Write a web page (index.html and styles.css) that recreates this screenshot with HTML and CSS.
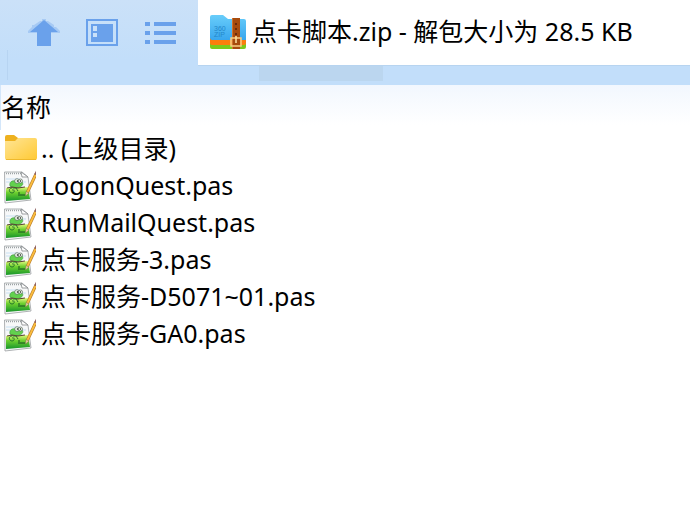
FILE: index.html
```
<!DOCTYPE html>
<html lang="zh-CN">

<head>
    <meta charset="UTF-8">
    <meta name="viewport" content="width=device-width, initial-scale=1.0">
    <title>点卡脚本.zip</title>
    <link rel="stylesheet" href="styles.css">
</head>

<body>
    <!-- shared icon for the .pas files -->
    <svg class="defs" aria-hidden="true">
        <defs>
            <linearGradient id="grass" x1="0" y1="0" x2="0" y2="1">
                <stop offset="0" stop-color="#e8fa80" />
                <stop offset="0.4" stop-color="#6ccf2f" />
                <stop offset="1" stop-color="#17952b" />
            </linearGradient>
            <linearGradient id="yellow" x1="0" y1="0" x2="1" y2="1">
                <stop offset="0" stop-color="#ffe596" />
                <stop offset="1" stop-color="#ffc933" />
            </linearGradient>
            <linearGradient id="blue" x1="0" y1="0" x2="0" y2="1">
                <stop offset="0" stop-color="#68cdfa" />
                <stop offset="1" stop-color="#38a6ee" />
            </linearGradient>
            <symbol id="pas" viewBox="0 0 36 36">
                <path d="M4.500 4H22L28 9L31 32L5 35Z" fill="#f7f8f9" stroke="#9a9ea1" stroke-width=".8" />
                <path d="M6 5.500H21" stroke="#9da2a5" stroke-width="1.500" stroke-dasharray="1 1" />
                <path d="M6 11H20M6 14H26" stroke="#d8e8f5" stroke-width="1.500" />
                <path d="M21 4L22 9H28Z" fill="#fff" stroke="#85898c" stroke-width=".8" />
                <path d="M6 20L28 19L30 31L6 33Z" fill="url(#grass)" />
                <path d="M10 18C9 14 12 12 16 13L22 14C24 16 22 18 20 19L14 21Z" fill="#62d14e" stroke="#3b9340" stroke-width=".6" />
                <path d="M12 20C8 20 9 25 12 25S15 21 12 22M16 20L18 23" fill="none" stroke="#27752c" stroke-width="1" />
                <path d="M7 20L12 19L18 20L25 19" fill="none" stroke="#574432" stroke-width="1.200" />
                <circle cx="17" cy="13" r="2.300" fill="#f4fff0" stroke="#59655c" stroke-width=".7" />
                <circle cx="20.500" cy="13" r="2" fill="#f4fff0" stroke="#59655c" stroke-width=".7" />
                <circle cx="17.500" cy="13" r=".8" fill="#111" />
                <circle cx="20.500" cy="13" r=".7" fill="#111" />
                <path d="M19 24V28M20 27H25" stroke="#164e20" stroke-width="1" />
                <path d="M27.500 24L36 6" stroke="#b67a28" stroke-width="3" />
                <path d="M27.500 24L36 6" stroke="#fbbd3e" stroke-width="1.800" />
                <path d="M35.500 7L37.500 3" stroke="#8f6262" stroke-width="3" />
                <path d="M25.500 28L26 23.500L29 25Z" fill="#edcfa0" stroke="#746047" stroke-width=".4" />
            </symbol>
        </defs>
    </svg>

    <header class="top">
        <div class="bar">
            <div class="tools">
                <button type="button" aria-label="上一级">
                    <svg width="32" height="28" viewBox="0 0 32 28" fill="#6aa1eb">
                        <path d="M14 0H18V2H20L26 6V8H28L32 12V14H23V27H9V14H0V12L4 8V6H6L12 2H14Z" fill-opacity=".35" />
                        <path d="M16 1L30 13H23V27H9V13H2Z" />
                    </svg>
                </button>
                <button type="button" aria-label="视图">
                    <svg width="32" height="28" viewBox="0 0 32 28">
                        <path d="M1 1H31V26H1Z" fill="none" stroke="#6aa1eb" stroke-width="2" />
                        <path d="M5 5H27V23H5Z" fill="#6aa1eb" />
                        <path d="M7 7H11V12H7ZM7 14H11V18H7Z" fill="#cae1f9" />
                    </svg>
                </button>
                <button type="button" aria-label="列表">
                    <svg width="32" height="28" viewBox="0 0 32 28" fill="#6aa1eb">
                        <path d="M1 3H6V7H1ZM10 3H32V7H10ZM1 12H6V16H1ZM10 12H32V16H10ZM1 21H6V25H1ZM10 21H32V25H10Z" />
                    </svg>
                </button>
            </div>
            <div class="title">
                <svg width="36" height="36" viewBox="0 0 36 36" aria-hidden="true">
                    <rect y="22" width="36" height="13" rx="2" fill="#7cc91b" />
                    <rect y="18" width="36" height="13" rx="2" fill="#fb7e0c" />
                    <path d="M0 3Q0 1 2 1H13L18 5H34Q36 5 36 7V26H2Q0 26 0 24Z" fill="url(#blue)" />
                    <text class="zip" x="4" y="17">360</text>
                    <text class="zip" x="4" y="23">ZIP</text>
                    <path d="M22 4H30V35H22Z" fill="#a74b0e" />
                    <path d="M22 4H23V35H22Z" fill="#cf722c" />
                    <path d="M25 9H27V11H25ZM25 14H27V16H25ZM25 19H27V21H25Z" fill="#692b0c" />
                    <rect x="21" y="24" width="10" height="8" fill="none" stroke="#f7cd83" stroke-width="1.500" />
                    <path d="M26 22V29" stroke="#ffe2a5" stroke-width="1.500" />
                </svg>
                <h1>点卡脚本.zip - 解包大小为 28.5 KB</h1>
            </div>
        </div>
        <div class="tab"></div>
    </header>

    <!-- file list -->
    <table class="files">
        <thead>
            <tr>
                <th scope="col">名称</th>
            </tr>
        </thead>
        <tbody>
            <tr>
                <td>
                    <div class="file">
                        <svg width="36" height="36" viewBox="0 0 36 36" aria-hidden="true">
                            <path d="M5 6Q5 4 7 4H14L18 7H35V14H5Z" fill="#eeb11e" />
                            <path d="M5 10H15L18 7H35Q37 7 37 9V27Q37 29 35 29H7Q5 29 5 27Z" fill="url(#yellow)" />
                            <path d="M6 28.500H36" stroke="#efb92c" />
                        </svg>
                        <span>.. (上级目录)</span>
                    </div>
                </td>
            </tr>
            <tr>
                <td>
                    <div class="file">
                        <svg width="36" height="36" aria-hidden="true"><use href="#pas" /></svg>
                        <span>LogonQuest.pas</span>
                    </div>
                </td>
            </tr>
            <tr>
                <td>
                    <div class="file">
                        <svg width="36" height="36" aria-hidden="true"><use href="#pas" /></svg>
                        <span>RunMailQuest.pas</span>
                    </div>
                </td>
            </tr>
            <tr>
                <td>
                    <div class="file">
                        <svg width="36" height="36" aria-hidden="true"><use href="#pas" /></svg>
                        <span>点卡服务-3.pas</span>
                    </div>
                </td>
            </tr>
            <tr>
                <td>
                    <div class="file">
                        <svg width="36" height="36" aria-hidden="true"><use href="#pas" /></svg>
                        <span>点卡服务-D5071~01.pas</span>
                    </div>
                </td>
            </tr>
            <tr>
                <td>
                    <div class="file">
                        <svg width="36" height="36" aria-hidden="true"><use href="#pas" /></svg>
                        <span>点卡服务-GA0.pas</span>
                    </div>
                </td>
            </tr>
        </tbody>
    </table>
</body>

</html>
```
FILE: styles.css
```
* {
    box-sizing: border-box;
    margin: 0;
    padding: 0;
}

body {
    background-color: white;
    color: black;
    font-family: "Noto Sans", "Noto Sans CJK SC", sans-serif;
    font-size: 25px;
    line-height: 37px;
}

.defs {
    position: absolute;
    width: 0;
    height: 0;
}

.top {
    position: relative;
    height: 85px;
    background: linear-gradient(#cbe1f8, #c2defa 60px);
}

/* thin divider under the tool buttons */
.top::before {
    content: "";
    position: absolute;
    left: 7px;
    top: 50px;
    width: 1px;
    height: 30px;
    background-color: #b7d4f2;
}

.bar {
    display: flex;
    height: 66px;
}

.tools {
    display: flex;
    align-items: center;
    gap: 26px;
    width: 198px;
    padding-left: 28px;
}

button {
    border: none;
    background: none;
    cursor: pointer;
}

svg {
    display: block;
    flex: none;
}

.title {
    display: flex;
    flex: 1;
    align-items: center;
    gap: 6px;
    padding: 0 0 2px 12px;
    border-bottom: 1px solid #b7d4f0;
    background-color: white;
}

.zip {
    fill: #2387c9;
    font-family: "Liberation Sans", sans-serif;
    font-size: 7px;
}

h1 {
    font-size: 25px;
    font-weight: normal;
    white-space: nowrap;
}

.tab {
    width: 124px;
    height: 15px;
    margin-left: 259px;
    background-color: #bbd6ef;
}

.files {
    width: 100%;
    border-collapse: collapse;
}

th {
    height: 45px;
    padding-left: 1px;
    background: linear-gradient(#f2f7fe, white 40px);
    box-shadow: inset 1px 0 #d3e6fa;
    font-weight: normal;
    text-align: left;
}

.file {
    display: flex;
    align-items: center;
    gap: 5px;
    height: 37px;
}

.file svg {
    overflow: visible;
}
```
